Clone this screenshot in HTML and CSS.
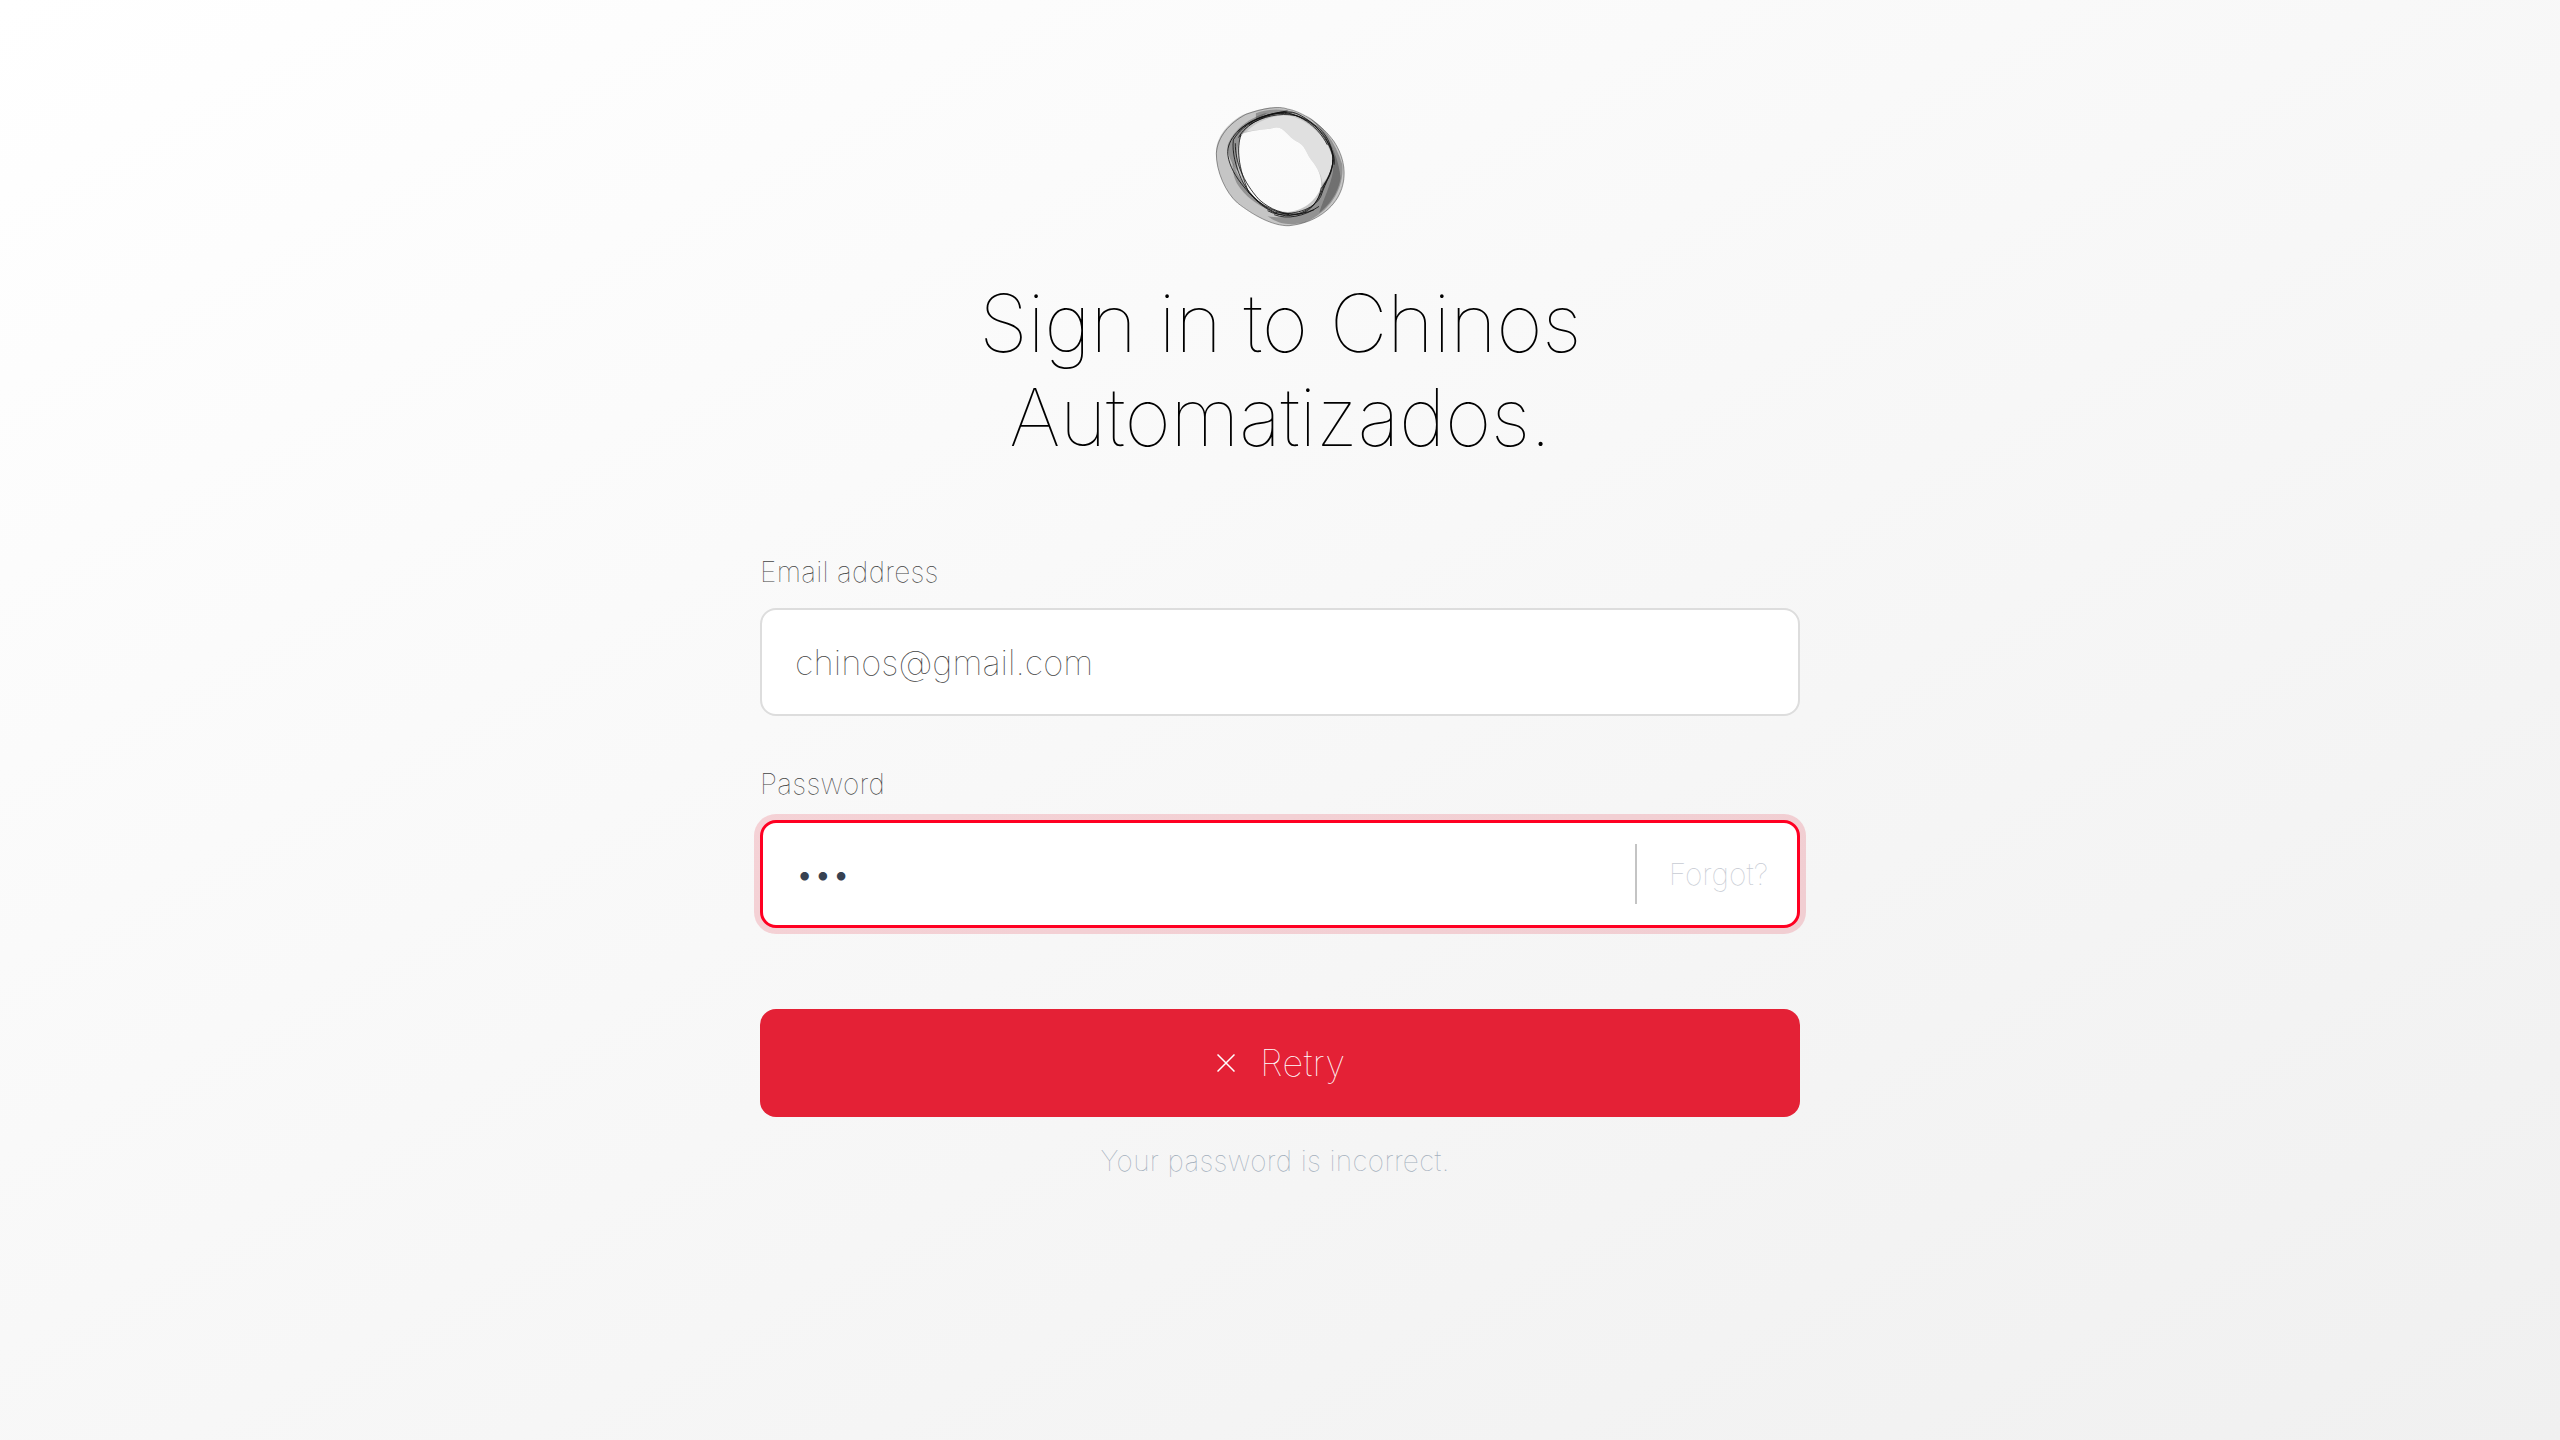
FILE: index.html
```html
<!DOCTYPE html>
<html lang="en">
<head>
  <meta charset="UTF-8" />
  <title>Sign in to Chinos Automatizados</title>
  <link rel="stylesheet" href="styles.css">
</head>
<body>
  <main class="signin">
    <svg class="logo" viewBox="165 70 395 370" aria-hidden="true">
      <defs><filter id="soft"><feGaussianBlur stdDeviation="1.8"/></filter></defs>
      <g filter="url(#soft)">
        <path class="band" fill-rule="evenodd" d="M170 210C172 165 205 125 250 100C290 85 340 70 375 80C430 90 490 130 525 180C555 225 565 280 545 330C525 380 470 425 390 433C340 435 280 400 235 365C200 335 170 270 170 210ZM245 160C265 145 320 145 350 138C375 135 385 165 410 178C440 190 440 215 460 240C480 265 490 290 485 320C470 360 430 390 385 392C340 390 290 360 265 325C245 290 230 200 245 160Z"/>
        <path class="glow" d="M350 138C375 135 385 165 410 178C440 190 440 215 460 240C480 265 490 290 490 305C515 280 525 250 518 220C500 165 450 115 385 100C340 100 290 120 262 150C290 145 325 143 350 138Z"/>
        <path class="shade" fill-rule="evenodd" d="M440 100C490 130 530 180 550 250C556 320 515 390 440 422C400 434 360 430 325 405C370 412 410 405 445 388C478 368 485 340 490 310C510 290 525 260 520 225C505 170 480 130 440 100Z"/>
        <path class="shade" d="M490 150C520 185 540 240 545 290C535 340 510 370 480 395C495 350 515 310 522 270C525 220 515 180 490 150Z"/>
        <path class="shade" d="M205 190C225 140 275 105 325 93C295 112 262 135 248 160C236 180 230 205 236 270C215 245 203 215 205 190Z"/>
        <path class="shade" d="M290 95C330 80 375 78 430 100C390 90 335 98 290 118Z"/>
        <path class="shade" d="M220 240C235 290 275 345 330 385C300 375 255 345 232 305C222 285 218 260 220 240Z"/>
        <path class="line" d="M205 210C208 165 255 120 320 102C380 85 440 100 490 150C525 190 530 250 508 290C487 320 487 350 455 378C430 395 405 403 380 403C325 398 280 350 245 305C222 275 205 240 205 210Z"/>
        <path class="line" d="M222 175C250 125 330 85 400 92C450 105 505 160 522 225C525 265 500 300 485 345C465 385 400 405 345 392C300 370 262 330 245 290C230 255 218 215 222 175Z"/>
        <path class="line" d="M238 168C258 128 320 97 375 92C430 100 480 140 505 190M325 388C360 408 425 402 465 385"/>
        <path class="line" d="M245 160C232 200 236 255 268 332C290 358 330 390 390 400"/>
        <path class="line" d="M228 185C228 240 250 300 300 355C335 385 370 400 420 398C455 390 480 360 487 318"/>
        <path class="line" d="M270 130C310 105 360 92 410 102C440 112 470 130 497 165C515 195 530 225 525 250"/>
        <path class="line" d="M235 150C270 115 330 95 385 88M488 320C505 295 520 265 522 235M345 400C385 415 435 405 480 375"/>
        <path class="faint" d="M171 215C175 165 210 125 260 98C310 80 360 72 385 82C430 90 490 130 525 180C555 225 565 280 545 330C525 380 470 425 390 433C340 435 280 400 235 365C200 335 170 270 171 215Z"/>
      </g>
    </svg>
    <h1 class="title">Sign in to Chinos<br>Automatizados.</h1>
    <form class="form">
      <label class="label" for="email">Email address</label>
      <input class="field email" id="email" type="email" value="chinos@gmail.com">
      <label class="label pass-label" for="password">Password</label>
      <div class="field field-error">
        <input class="pass" id="password" type="password" value="abc">
        <a class="forgot" href="#">Forgot?</a>
      </div>
      <button class="retry" type="button">
        <svg class="x" viewBox="0 0 18 18"><path d="M0.5 0.5L17.5 17.5M17.5 0.5L0.5 17.5"/></svg>
        Retry
      </button>
      <p class="error">Your password is incorrect.</p>
    </form>
  </main>
</body>
</html>
```

FILE: styles.css
```css
* {
  margin: 0;
  padding: 0;
  box-sizing: border-box;
  font-family: Inter, sans-serif;
  font-weight: 100;
}

body {
  min-height: 100vh;
  background: linear-gradient(to bottom right, #ffffff 0%, #f0f0f0 100%);
  background-attachment: fixed;
}

.signin {
  display: flex;
  flex-direction: column;
  align-items: center;
  padding-top: 105px;
}

.logo {
  width: 132px;
  height: 123px;
}

.band {
  fill: rgba(110, 110, 110, 0.38);
}

.glow {
  fill: rgba(255, 255, 255, 0.45);
}

.shade {
  fill: rgba(30, 30, 30, 0.3);
}

.line {
  fill: none;
  stroke: rgba(10, 10, 10, 0.8);
  stroke-width: 3;
}

.faint {
  fill: none;
  stroke: rgba(40, 40, 40, 0.55);
  stroke-width: 2.5;
}

.title {
  margin-top: 48px;
  font-size: 80px;
  line-height: 94px;
  letter-spacing: -0.5px;
  text-align: center;
  color: #000;
}

.form {
  width: 1040px;
  margin-top: 90px;
  display: flex;
  flex-direction: column;
}

.label {
  font-size: 28px;
  line-height: 36px;
  letter-spacing: 0.3px;
  color: #444;
}

.pass-label {
  margin-top: 50px;
}

.field {
  height: 108px;
  margin-top: 18px;
  background: #fff;
  border: 2px solid #ddd;
  border-radius: 16px;
  outline: none;
}

.email {
  padding: 0 33px;
  font-size: 34.6px;
  color: #444;
}

.field-error {
  display: flex;
  align-items: center;
  border: 3px solid #ff0022;
  box-shadow: 0 0 0 6px rgba(228, 32, 54, 0.18);
}

.pass {
  flex: 1;
  min-width: 0;
  height: 60px;
  padding-left: 34px;
  border: none;
  border-right: 2px solid #c4c4c4;
  outline: none;
  font-size: 27px;
  font-weight: 400;
  letter-spacing: 3px;
  color: #374151;
}

.forgot {
  padding: 0 29px 0 32px;
  font-size: 30px;
  color: #c8ccd4;
  text-decoration: none;
}

.retry {
  display: flex;
  justify-content: center;
  align-items: center;
  gap: 25px;
  height: 108px;
  margin-top: 81px;
  padding-left: 3px;
  border: none;
  border-radius: 16px;
  background: #e42136;
  color: #fff;
  font-size: 36px;
  letter-spacing: 0.5px;
}

.x {
  width: 18px;
  height: 18px;
  fill: none;
  stroke: #fff;
  stroke-width: 1.5;
}

.error {
  margin-top: 26px;
  padding-right: 10px;
  font-size: 28px;
  line-height: 36px;
  letter-spacing: 0.35px;
  text-align: center;
  color: #a3afbc;
}
```
